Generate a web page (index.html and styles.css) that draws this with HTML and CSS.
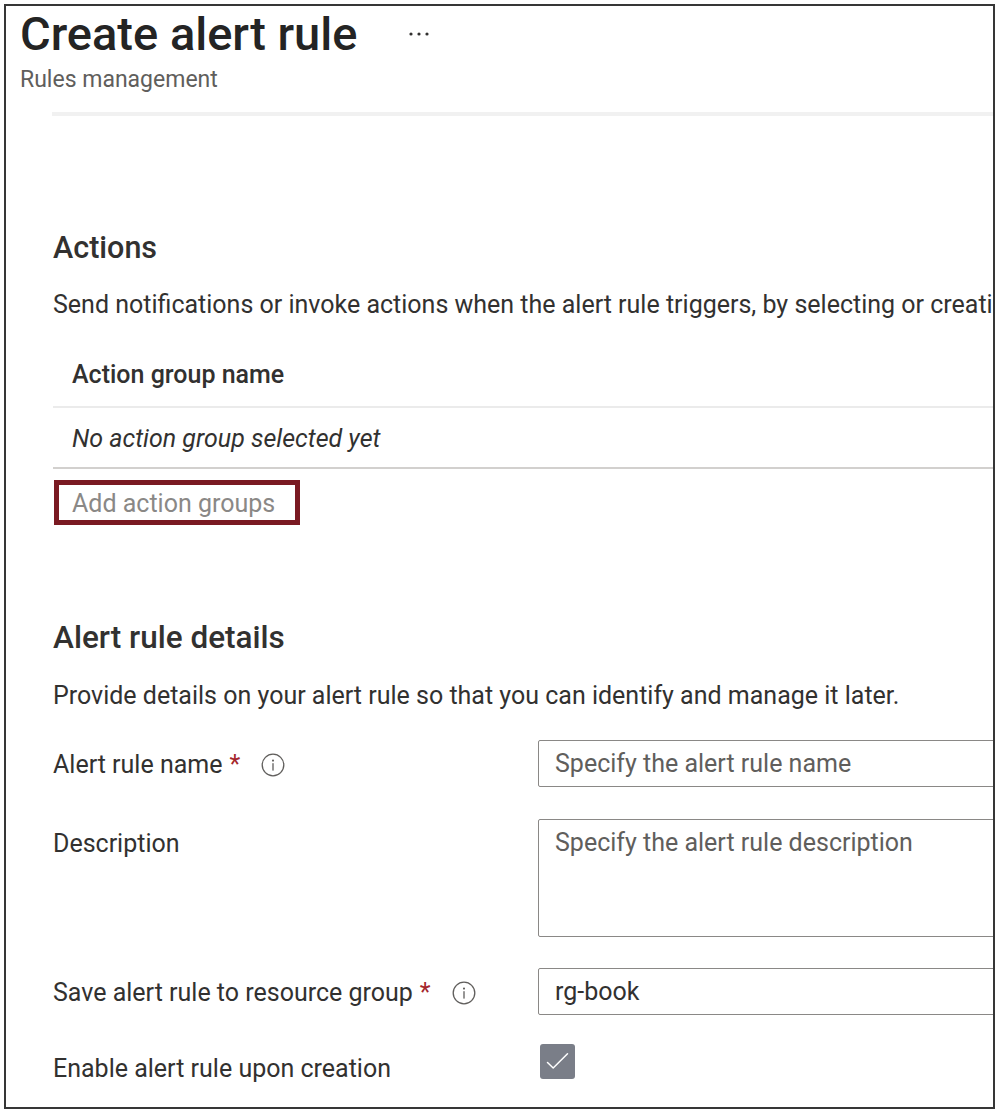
FILE: index.html
```html
<!DOCTYPE html>
<html lang="en">
<head>
<meta charset="utf-8">
<title>Create alert rule</title>
<link rel="stylesheet" href="styles.css">
</head>
<body>
<div class="frame">
  <header class="page-head">
    <div class="title-row">
      <h1 class="title">Create alert rule</h1>
      <span class="more" aria-label="More">
        <svg width="20" height="4" viewBox="0 0 20 4"><circle cx="2" cy="2" r="1.6"/><circle cx="10" cy="2" r="1.6"/><circle cx="18" cy="2" r="1.6"/></svg>
      </span>
    </div>
    <div class="subtitle">Rules management</div>
  </header>
  <div class="divider"></div>

  <main class="content">
    <section class="section section--actions">
      <h2 class="section-title">Actions</h2>
      <p class="lead">Send notifications or invoke actions when the alert rule triggers, by selecting or creating a new action group.</p>
      <div class="group-table">
        <div class="th">Action group name</div>
        <div class="td">No action group selected yet</div>
      </div>
      <button class="add-btn" type="button">Add action groups</button>
    </section>

    <section class="section section--details">
      <h2 class="section-title">Alert rule details</h2>
      <p class="lead">Provide details on your alert rule so that you can identify and manage it later.</p>

      <div class="field field--name">
        <label class="label">
          <span>Alert rule name</span><span class="req">*</span>
          <span class="info"><svg width="24" height="24" viewBox="0 0 24 24"><circle cx="12" cy="12" r="10.8" fill="none" stroke="#605e5c" stroke-width="1.3"/><circle cx="12" cy="7.6" r="1.05" fill="#605e5c"/><rect x="11.35" y="10.2" width="1.3" height="7.4" fill="#605e5c"/></svg></span>
        </label>
        <input class="input" type="text" placeholder="Specify the alert rule name">
      </div>

      <div class="field field--desc">
        <label class="label"><span>Description</span></label>
        <textarea class="textarea" placeholder="Specify the alert rule description"></textarea>
      </div>

      <div class="field field--rg">
        <label class="label">
          <span>Save alert rule to resource group</span><span class="req">*</span>
          <span class="info"><svg width="24" height="24" viewBox="0 0 24 24"><circle cx="12" cy="12" r="10.8" fill="none" stroke="#605e5c" stroke-width="1.3"/><circle cx="12" cy="7.6" r="1.05" fill="#605e5c"/><rect x="11.35" y="10.2" width="1.3" height="7.4" fill="#605e5c"/></svg></span>
        </label>
        <input class="input input--filled" type="text" value="rg-book">
      </div>

      <div class="field field--enable">
        <label class="label"><span>Enable alert rule upon creation</span></label>
        <span class="checkbox" role="checkbox" aria-checked="true">
          <svg width="35" height="35" viewBox="0 0 35 35"><path d="M7.5 18.5 L13.2 24 L27.5 9.8" fill="none" stroke="#fff" stroke-width="1.5" stroke-linecap="round" stroke-linejoin="round"/></svg>
        </span>
      </div>
    </section>
  </main>
</div>
</body>
</html>
```

FILE: styles.css
```css
* {
  box-sizing: border-box;
}

html,
body {
  margin: 0;
  background: #ffffff;
}

body {
  font-family: Roboto, "Liberation Sans", Arial, sans-serif;
  color: #323130;
  font-size: 25px;
  line-height: 32px;
}

.frame {
  margin: 4px 0 0 4px;
  width: 991px;
  height: 1105px;
  border: 2px solid #363636;
  overflow: hidden;
  padding-top: 1px;
  background: #ffffff;
}

/* Header */
.page-head {
  padding-left: 14px;
}

.title-row {
  display: flex;
  align-items: center;
  height: 54px;
}

.title {
  margin: 0;
  font-size: 47px;
  font-weight: 500;
  line-height: 54px;
  color: #242424;
}

.more {
  display: flex;
  margin-left: 52px;
  fill: #323130;
}

.subtitle {
  margin-top: 5px;
  font-size: 23px;
  line-height: 28px;
  color: #605e5c;
}

.divider {
  margin: 18px 0 0 46px;
  height: 4px;
  background: #f1f1f1;
}

/* Content */
.content {
  padding-left: 47px;
  width: 1150px;
}

.section-title {
  margin: 0;
  font-size: 30.5px;
  font-weight: 500;
  line-height: 36px;
  color: #323130;
}

.section--details .section-title {
  font-size: 31.5px;
}

.section--actions .section-title {
  margin-top: 114px;
}

.section--details .section-title {
  margin-top: 95px;
}

.lead {
  margin: 23px 0 0;
  white-space: nowrap;
}

.section--details .lead {
  margin-top: 24px;
}

/* Action group table */
.group-table {
  margin-top: 23px;
}

.th {
  padding: 15px 19px;
  font-weight: 500;
  border-bottom: 2px solid #ebebeb;
}

.td {
  padding: 15px 19px 12px;
  font-style: italic;
  border-bottom: 2px solid #d2d0ce;
}

.add-btn {
  display: block;
  margin: 11px 0 0 1px;
  width: 246px;
  height: 45px;
  padding: 3px 0 0 13px;
  border: 5px solid #7a1a22;
  background: #ffffff;
  font-family: inherit;
  font-size: 25px;
  line-height: 32px;
  color: #8a8886;
  text-align: left;
}

/* Form */
.field {
  display: grid;
  grid-template-columns: 485px 560px;
  align-items: start;
}

.field--name {
  margin-top: 28px;
}

.field--desc {
  margin-top: 32px;
}

.field--rg {
  margin-top: 31px;
}

.field--enable {
  margin-top: 29px;
}

.label {
  display: flex;
  align-items: center;
  padding-top: 9px;
  line-height: 32px;
  white-space: nowrap;
}

.req {
  margin-left: 7px;
  color: #a4262c;
}

.info {
  display: flex;
  margin-left: 21px;
}

.input,
.textarea {
  display: block;
  width: 560px;
  border: 1px solid #8a8886;
  border-radius: 2px;
  background: #ffffff;
  font-family: inherit;
  font-size: 25px;
  color: #323130;
  outline: none;
}

.input {
  height: 47px;
  padding: 0 16px;
  line-height: 45px;
}

.textarea {
  height: 118px;
  padding: 7px 16px;
  line-height: 32px;
  resize: none;
}

.input::placeholder,
.textarea::placeholder {
  color: #605e5c;
  opacity: 1;
}

.checkbox {
  display: flex;
  width: 35px;
  height: 35px;
  margin-left: 2px;
  border-radius: 3px;
  background: #7a7e88;
}
```
